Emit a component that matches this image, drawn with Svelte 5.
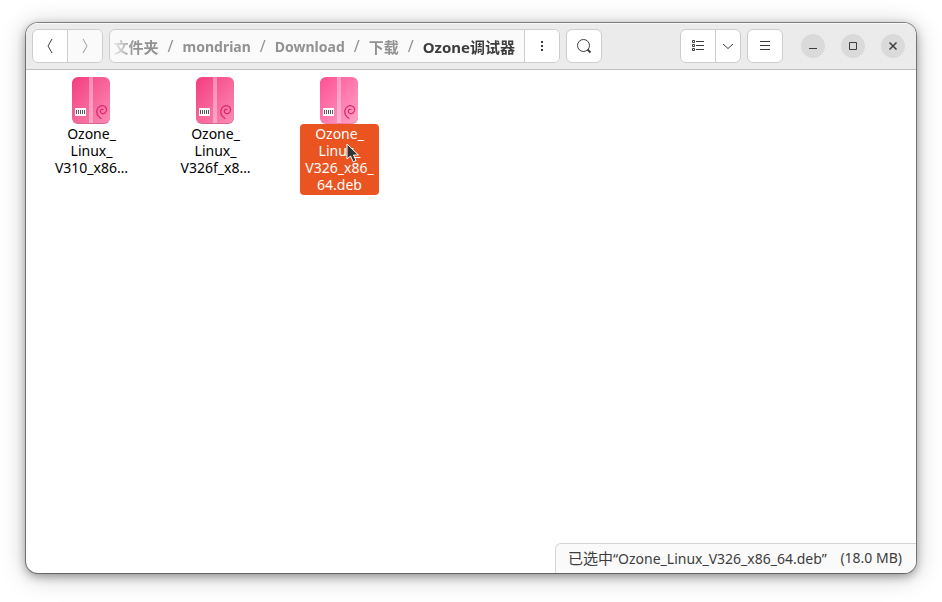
<script>
  let files = $state([
    { name: 'Ozone_Linux_V310_x86_64.deb', label: 'Ozone_\nLinux_\nV310_x86…' },
    { name: 'Ozone_Linux_V326f_x86_64.deb', label: 'Ozone_\nLinux_\nV326f_x8…' },
    { name: 'Ozone_Linux_V326_x86_64.deb', label: 'Ozone_\nLinux_\nV326_x86_\n64.deb' }
  ]);
  let selected = $state(2);
  const crumbs = ['文件夹', 'mondrian', 'Download', '下载', 'Ozone调试器'];
  const hasHan = (text) => /[\u4e00-\u9fff]/.test(text);
</script>

<div class="desktop">
  <main class="window">
    <header>
      <div class="group">
        <button class="btn" aria-label="后退">
          <svg width="16" height="16" viewBox="0 0 16 16"><path d="M10 1 6 8l4 7" /></svg>
        </button>
        <button class="btn off" aria-label="前进" disabled>
          <svg width="16" height="16" viewBox="0 0 16 16"><path d="M6 1l4 7-4 7" /></svg>
        </button>
      </div>

      <div class="group path">
        <nav aria-label="路径">
          {#each crumbs as crumb, i}
            {#if i > 0}<span class="sep">/</span>{/if}
            <button class:han={hasHan(crumb)} class:current={i === crumbs.length - 1}>{crumb}</button>
          {/each}
        </nav>
        <button class="btn" aria-label="更多">
          <svg width="16" height="16" viewBox="0 0 16 16"><path class="fill" d="M7 3h2v2H7zM7 7h2v2H7zM7 11h2v2H7z" /></svg>
        </button>
      </div>

      <div class="group">
        <button class="btn" aria-label="搜索">
          <svg width="16" height="16" viewBox="0 0 16 16"><circle cx="7.500" cy="7.500" r="6" /><path class="thick" d="M11.500 11.500l3 3" /></svg>
        </button>
      </div>

      <div class="spacer"></div>

      <div class="group">
        <button class="btn" aria-label="列表视图">
          <svg width="16" height="16" viewBox="0 0 16 16"><path d="M2.500 2.500h2v2h-2zM2.500 6.500h2v2h-2zM2.500 10.500h2v2h-2zM6 3.500h8M6 7.500h8M6 11.500h8" /></svg>
        </button>
        <button class="btn narrow" aria-label="视图选项">
          <svg width="16" height="16" viewBox="0 0 16 16"><path d="M3 6l5 4.500L13 6" /></svg>
        </button>
      </div>

      <div class="group">
        <button class="btn" aria-label="菜单">
          <svg width="16" height="16" viewBox="0 0 16 16"><path d="M3 3.500h10M3 7.500h10M3 11.500h10" /></svg>
        </button>
      </div>

      <div class="controls">
        <button aria-label="最小化"><svg width="16" height="16" viewBox="0 0 16 16"><path d="M4 10.500h8" /></svg></button>
        <button aria-label="最大化"><svg width="16" height="16" viewBox="0 0 16 16"><path d="M4.500 4.500h7v7h-7z" /></svg></button>
        <button aria-label="关闭"><svg width="16" height="16" viewBox="0 0 16 16"><path class="cross" d="M4.500 4.500l7 7M11.500 4.500l-7 7" /></svg></button>
      </div>
    </header>

    <section class="files" aria-label="文件">
      {#each files as file, i}
        <button class="file" class:selected={selected === i} title={file.name} onclick={() => (selected = i)}>
          <svg class="package" width="40" height="47" viewBox="0 0 40 47">
            <defs>
              <linearGradient id="pkg{i}" x1="0" y1="0" x2="1" y2="1">
                <stop offset="0" stop-color={selected === i ? '#ff4f93' : '#f53c80'} />
                <stop offset="1" stop-color={selected === i ? '#ffa3c8' : '#fa8cb4'} />
              </linearGradient>
            </defs>
            <rect x="0" y="1" width="38" height="46" rx="6" fill={selected === i ? '#f07fa9' : '#dc6690'} />
            <rect x="0" y="0" width="38" height="46" rx="6" fill="url(#pkg{i})" />
            <rect x="17" y="0" width="4" height="46" fill="#fff" opacity=".35" />
            <rect x="3" y="31" width="11" height="8" fill="#fff" />
            <path d="M4.500 33v4M6.500 33v4M8.500 33v4M10.500 33v4M12.500 33v4" stroke="#555" stroke-width="1" />
            <path d="M29 41.500C25.500 39 24 36 25 33C26 29.500 29.500 28 32 29C35 30 35.500 34 33 36C31 37.300 28.500 36.500 28.300 34.500C28.200 32.800 30 31.800 31 32.500" fill="none" stroke="#dc2268" stroke-width="1.200" stroke-linecap="round" />
          </svg>
          <span class="label">{file.label}</span>
          {#if i === 2}
            <svg class="pointer" width="14" height="20" viewBox="0 0 14 20">
              <path d="M1 1v15l3.500-3 2.700 5.800 2.800-1.300-2.600-5.500h5z" fill="#333" stroke="#fff" stroke-width="1" />
            </svg>
          {/if}
        </button>
      {/each}
    </section>

    <footer><span><span class="han">已选中</span>“Ozone_Linux_V326_x86_64.deb”</span><span>(18.0 MB)</span></footer>
  </main>
</div>

<style>
  :global(body) {
    background: #fff;
  }

  .desktop {
    box-sizing: border-box;
    min-height: 100vh;
    display: flex;
    padding: 23px 26px 29px;
    overflow: hidden;
    font-family: 'Noto Sans', 'Noto Sans CJK SC', sans-serif;
    font-size: 14px;
    color: #3d3d3d;
  }

  button {
    margin: 0;
    padding: 0;
    border: 0;
    background: none;
    font: inherit;
    color: inherit;
  }

  .window {
    flex: 1;
    min-width: 0;
    display: flex;
    flex-direction: column;
    border-radius: 12px;
    background: #fff;
    overflow: hidden;
    box-shadow:
      0 0 0 1px rgba(0, 0, 0, 0.4),
      0 3px 10px rgba(0, 0, 0, 0.35),
      0 3px 24px rgba(0, 0, 0, 0.25);
  }

  header {
    display: flex;
    align-items: center;
    gap: 6px;
    padding: 6px;
    background: #ebebeb;
    border-bottom: 1px solid #bfbfbf;
    box-shadow: inset 0 1px #f9f9f9;
  }

  .group {
    display: flex;
    height: 32px;
    border: 1px solid #cdcdcd;
    border-radius: 6px;
    background: #fff;
    overflow: hidden;
  }

  .btn {
    box-sizing: content-box;
    width: 34px;
    display: flex;
    align-items: center;
    justify-content: center;
    flex: none;
  }

  .group > * + .btn {
    border-left: 1px solid #cdcdcd;
  }

  .narrow {
    width: 24px;
  }

  .off {
    background: #fafafa;
  }

  .off svg {
    opacity: 0.5;
  }

  header svg {
    fill: none;
    stroke: #3d3d3d;
    stroke-width: 1;
  }

  header .fill {
    fill: #3d3d3d;
    stroke: none;
  }

  header .thick {
    stroke-width: 2;
  }

  header .cross {
    stroke-width: 1.5;
  }

  .path {
    flex: 0 1 449px;
    min-width: 0;
    background: #fafafa;
  }

  .path .btn {
    background: #fff;
  }

  nav {
    flex: 1;
    min-width: 0;
    display: flex;
    align-items: center;
    justify-content: flex-end;
    gap: 9px;
    padding-right: 9px;
    overflow: hidden;
    white-space: nowrap;
    font-weight: 700;
    color: #929292;
    mask-image: linear-gradient(to right, transparent, #000 24px);
  }

  .sep {
    font-size: 16px;
    font-weight: 400;
  }

  .han {
    font-size: 15px;
  }

  .current {
    color: #3d3d3d;
  }

  .spacer {
    flex: 1;
  }

  .controls {
    display: flex;
    gap: 16px;
    padding: 0 5px 0 12px;
  }

  .controls button {
    width: 24px;
    height: 24px;
    display: flex;
    align-items: center;
    justify-content: center;
    border-radius: 50%;
    background: #dadada;
  }

  .files {
    flex: 1;
    display: flex;
    flex-wrap: wrap;
    align-content: flex-start;
    gap: 45px;
    padding: 7px 26px;
  }

  .file {
    position: relative;
    width: 79px;
    display: flex;
    flex-direction: column;
    align-items: center;
    color: #000;
  }

  .package {
    display: block;
  }

  .label {
    align-self: stretch;
    padding: 1px 0 2px;
    border-radius: 4px;
    line-height: 17px;
    white-space: pre;
    text-align: center;
  }

  .selected .label {
    background: #e95420;
    color: #fff;
  }

  .pointer {
    position: absolute;
    left: 46px;
    top: 66px;
  }

  footer {
    align-self: flex-end;
    display: flex;
    justify-content: space-between;
    gap: 8px;
    min-width: 334px;
    padding: 0 14px 0 12px;
    border: 1px solid #d5d5d5;
    border-width: 1px 0 0 1px;
    border-radius: 6px 0 0 0;
    background: #fafafa;
    line-height: 28px;
    white-space: nowrap;
  }
</style>
